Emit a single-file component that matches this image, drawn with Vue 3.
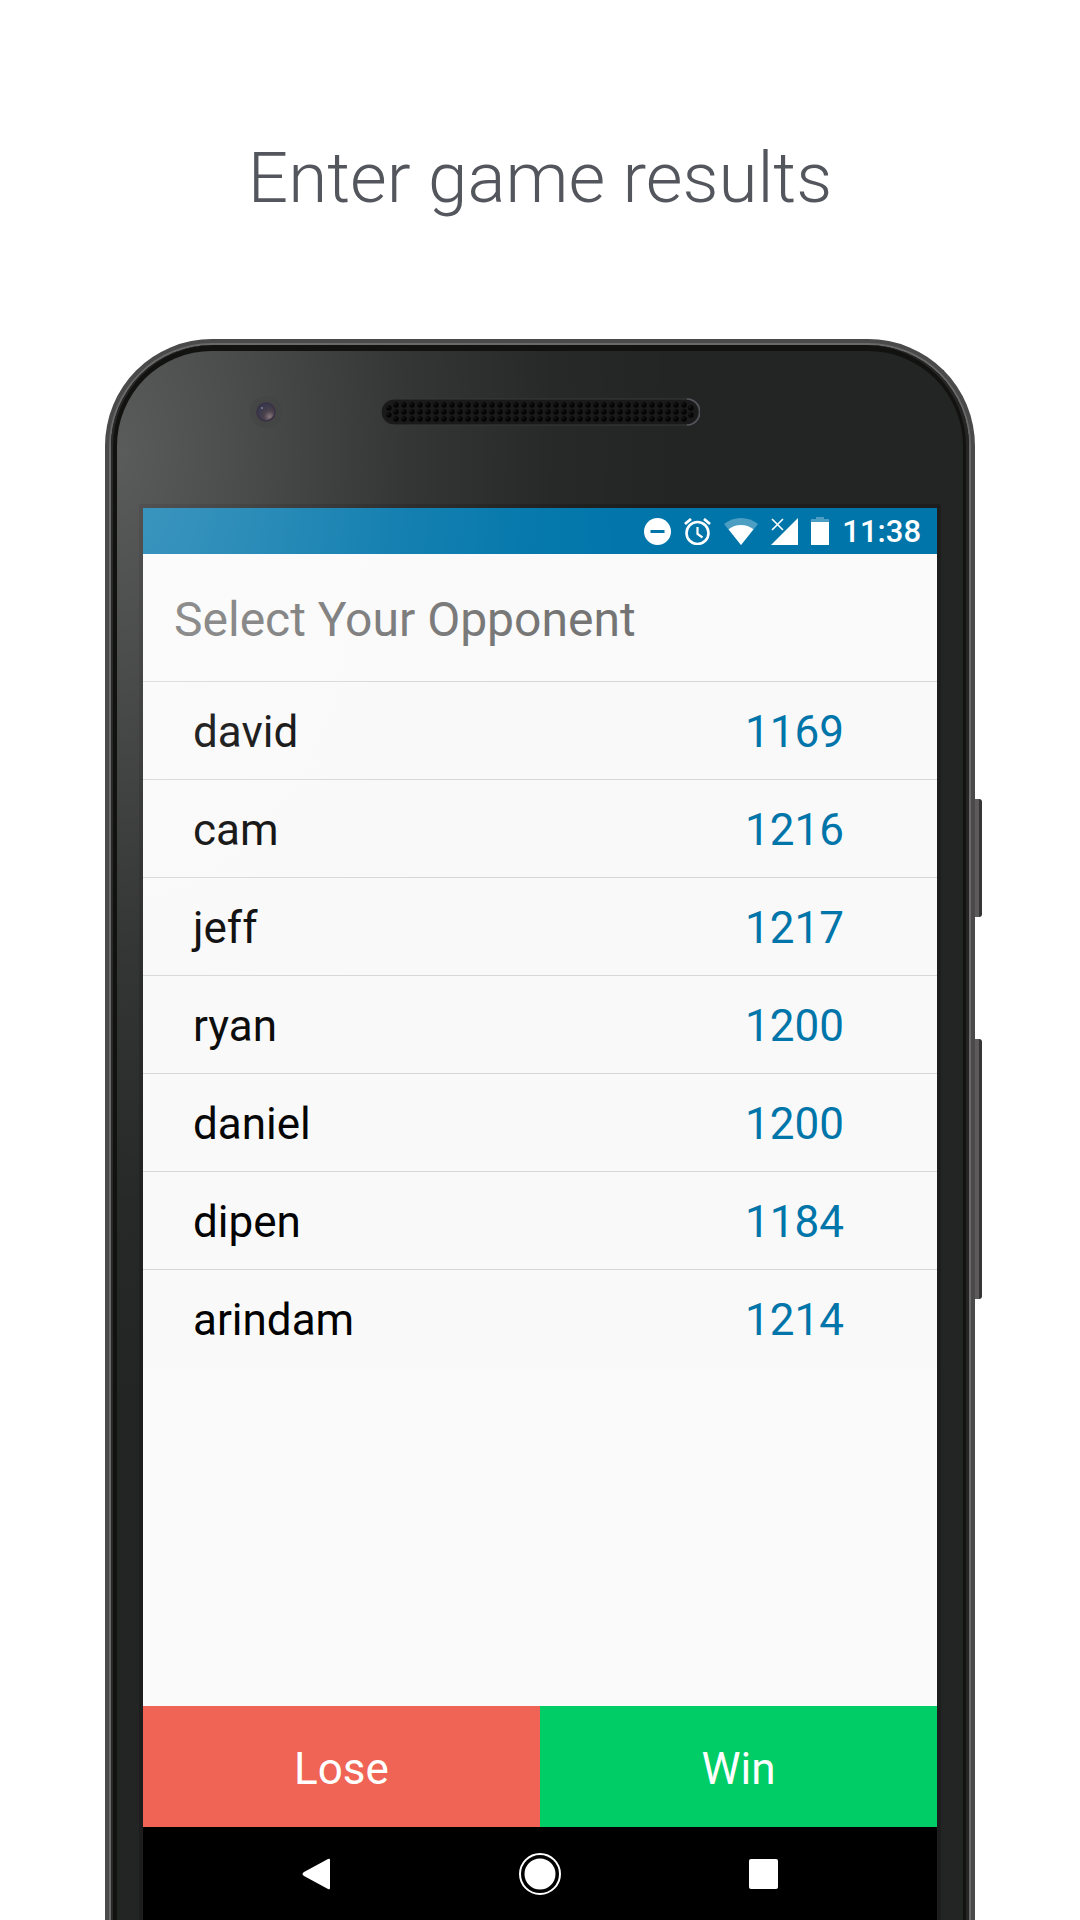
<script setup>
const players = [
  { name: 'david', rating: 1169 },
  { name: 'cam', rating: 1216 },
  { name: 'jeff', rating: 1217 },
  { name: 'ryan', rating: 1200 },
  { name: 'daniel', rating: 1200 },
  { name: 'dipen', rating: 1184 },
  { name: 'arindam', rating: 1214 }
]

// Perforations of the earpiece: 37 columns of three, and a pair at each end
const holes = []
for (let column = 0; column < 37; column++) {
  for (let row = 0; row < 3; row++) {
    holes.push({ x: 15 + column * 8, y: 6 + row * 7 })
  }
}
for (const x of [8, 310]) {
  holes.push({ x, y: 9 }, { x, y: 16 })
}
</script>

<template>
  <main class="page">
    <h1 class="headline">Enter game results</h1>

    <div class="phone">
      <span class="side-key power"></span>
      <span class="side-key volume"></span>
      <div class="rim">
        <div class="groove">
          <div class="glass">
            <div class="top-bezel">
              <svg class="camera" width="34" height="34" viewBox="0 0 34 34" aria-hidden="true">
                <defs>
                  <radialGradient id="lens" cx="0.7" cy="0.75" r="0.7">
                    <stop offset="0" stop-color="#86767c" />
                    <stop offset="0.45" stop-color="#4a414b" />
                    <stop offset="1" stop-color="#38384e" />
                  </radialGradient>
                </defs>
                <circle cx="17" cy="17" r="16" fill="#3f4341" fill-opacity="0.5" />
                <circle cx="17" cy="17" r="9" fill="url(#lens)" stroke="#3b3144" stroke-width="1.5" />
                <circle cx="13" cy="13" r="1" fill="#8080a0" />
              </svg>
              <svg class="speaker" width="320" height="28" viewBox="-1 -1 320 28" aria-hidden="true">
                <rect x="0" y="0" width="318" height="26" rx="13" fill="#1a1a1a" stroke="#393b3b" />
                <path d="M306 0a13 13 0 0 1 0 26" fill="none" stroke="#55565c" stroke-width="1.5" />
                <g v-for="(hole, i) in holes" :key="i">
                  <circle :cx="hole.x" :cy="hole.y" r="2.7" fill="#050505" />
                  <circle :cx="hole.x - 1" :cy="hole.y - 1" r="0.8" fill="#2b2b2b" />
                </g>
              </svg>
            </div>

            <div class="screen">
              <div class="status-bar">
                <svg width="27" height="27" viewBox="0 0 27 27" aria-hidden="true">
                  <circle cx="13.5" cy="13.5" r="13.5" fill="#fff" />
                  <rect x="6.5" y="12" width="14" height="3" fill="#0075aa" />
                </svg>
                <svg width="27" height="27" viewBox="0 0 27 27" fill="none" stroke="#fff" aria-hidden="true">
                  <circle cx="13.5" cy="15" r="11" stroke-width="2.6" />
                  <path d="M13.5 9v7l5 3.500" stroke-width="2.2" />
                  <path d="M1 6l6-5M26 6l-6-5" stroke-width="2.8" />
                </svg>
                <svg width="34" height="27" viewBox="0 0 34 27" aria-hidden="true">
                  <path d="M17 27L0 6Q7.500 0 17 0t17 6z" fill="#fff" fill-opacity="0.3" />
                  <path d="M17 27L4.500 11.300Q10 7 17 7t12.500 4.300z" fill="#fff" />
                </svg>
                <svg width="27" height="27" viewBox="0 0 27 27" aria-hidden="true">
                  <path d="M27 0v27H0z" fill="#fff" />
                  <path d="M1 1l11 11M12 1L1 12" stroke="#fff" stroke-width="1.6" />
                </svg>
                <svg width="18" height="28" viewBox="0 0 18 28" aria-hidden="true">
                  <path d="M5 0h8v2h5v3H0V2h5z" fill="#fff" fill-opacity="0.3" />
                  <path d="M0 5h18v23H0z" fill="#fff" />
                </svg>
                <time class="clock">11:38</time>
              </div>

              <h2 class="prompt">Select Your Opponent</h2>

              <table class="players" aria-label="Opponents">
                <tbody>
                  <tr v-for="player in players" :key="player.name">
                    <th scope="row">{{ player.name }}</th>
                    <td>{{ player.rating }}</td>
                  </tr>
                </tbody>
              </table>

              <div class="actions">
                <button type="button" class="lose">Lose</button>
                <button type="button" class="win">Win</button>
              </div>

              <nav class="nav-bar">
                <button type="button" aria-label="Back">
                  <svg width="44" height="44" viewBox="0 0 44 44">
                    <path d="M35 8v28q0 2-2 1L9 24q-3-2 0-4L33 7q2-1 2 1z" fill="#fff" />
                  </svg>
                </button>
                <button type="button" aria-label="Home">
                  <svg width="44" height="44" viewBox="0 0 44 44">
                    <circle cx="22" cy="22" r="20" fill="none" stroke="#fff" stroke-width="2" />
                    <circle cx="22" cy="22" r="15.5" fill="#fff" />
                  </svg>
                </button>
                <button type="button" aria-label="Recent apps">
                  <svg width="44" height="44" viewBox="0 0 44 44">
                    <rect x="8" y="7" width="29" height="30" rx="2" fill="#fff" />
                  </svg>
                </button>
              </nav>
            </div>
            <div class="gloss"></div>
          </div>
        </div>
      </div>
    </div>
  </main>
</template>

<style>
body {
  margin: 0;
  background: #fff;
}
</style>

<style scoped>
.page {
  box-sizing: border-box;
  display: flex;
  flex-direction: column;
  min-height: 100vh;
  padding-top: 134px;
  font-family: Roboto, sans-serif;
}

.headline {
  margin: 0 0 117px;
  color: #53565c;
  font-size: 71px;
  font-weight: 300;
  line-height: 88px;
  text-align: center;
}

.phone {
  position: relative;
  flex: 1;
  display: flex;
  margin: 0 105px;
  border: 4px solid #4b4a4b;
  border-bottom: 0;
  border-radius: 107px 107px 0 0;
  background: #4b4a4b;
}

.side-key {
  position: absolute;
  right: -11px;
  width: 7px;
  box-sizing: border-box;
  border-right: 3px solid #353535;
  border-radius: 0 3px 3px 0;
  background: #5c5a5b;
}

.power {
  top: 456px;
  height: 118px;
}

.volume {
  top: 696px;
  height: 260px;
}

.rim {
  flex: 1;
  display: flex;
  border: 2px solid #6b6969;
  border-bottom: 0;
  border-radius: 103px 103px 0 0;
  background: #6b6969;
}

.groove {
  flex: 1;
  display: flex;
  padding: 6px 6px 0;
  border-radius: 101px 101px 0 0;
  background: #121211;
  box-shadow: inset 2px 0 0 #282828, inset -3px 0 0 #262626;
}

.glass {
  position: relative;
  flex: 1;
  display: flex;
  flex-direction: column;
  min-width: 0;
  padding: 0 22px;
  overflow: hidden;
  border-radius: 95px 95px 0 0;
  background: #232524;
}

.top-bezel {
  display: grid;
  grid-template-columns: 1fr auto 1fr;
  align-items: center;
  height: 122px;
  padding-bottom: 31px;
}

.camera,
.speaker {
  position: relative;
  z-index: 1;
}

.camera {
  margin-left: 110px;
}

.speaker {
  grid-column: 2;
}

.screen {
  flex: 1;
  display: flex;
  flex-direction: column;
  border: 4px solid #1c1d1c;
  border-bottom: 0;
  border-radius: 4px 4px 0 0;
  background: #fafafa;
}

.status-bar {
  display: flex;
  align-items: center;
  justify-content: flex-end;
  gap: 13px;
  height: 46px;
  padding-right: 16px;
  background: #0075aa;
}

.clock {
  padding-top: 2px;
  color: #fff;
  font-size: 31px;
  font-weight: 500;
  line-height: 44px;
}

.prompt {
  margin: 0;
  padding: 38px 31px 33px;
  color: #737373;
  font-size: 48px;
  font-weight: 400;
  line-height: 56px;
}

.players {
  width: 100%;
  border-spacing: 0;
  background: #f9f9f9;
  font-size: 44px;
  line-height: 52px;
}

.players th,
.players td {
  height: 95px;
  padding: 2px 0 0;
  border-top: 1px solid #d6d6d6;
}

.players th {
  padding-left: 50px;
  color: #000;
  font-weight: 400;
  text-align: left;
}

.players td {
  padding-right: 93px;
  color: #0075aa;
  text-align: right;
}

.actions {
  display: flex;
  margin-top: auto;
}

.actions button {
  flex: 1;
  height: 121px;
  padding: 4px 0 0;
  border: 0;
  color: #fff;
  font: 400 44px/52px Roboto, sans-serif;
}

.lose {
  background: #ef6454;
}

.win {
  background: #00cd66;
}

.nav-bar {
  display: flex;
  align-items: center;
  justify-content: center;
  gap: 179px;
  height: 93px;
  background: #000;
}

.nav-bar button {
  display: flex;
  padding: 0;
  border: 0;
  background: none;
}

.gloss {
  position: absolute;
  inset: 0;
  background: radial-gradient(ellipse 560px 960px at 0 100px, rgba(255, 255, 255, 0.25), rgba(255, 255, 255, 0.19) 20%, rgba(255, 255, 255, 0.08) 52%, rgba(255, 255, 255, 0.02) 78%, transparent);
  pointer-events: none;
}
</style>
